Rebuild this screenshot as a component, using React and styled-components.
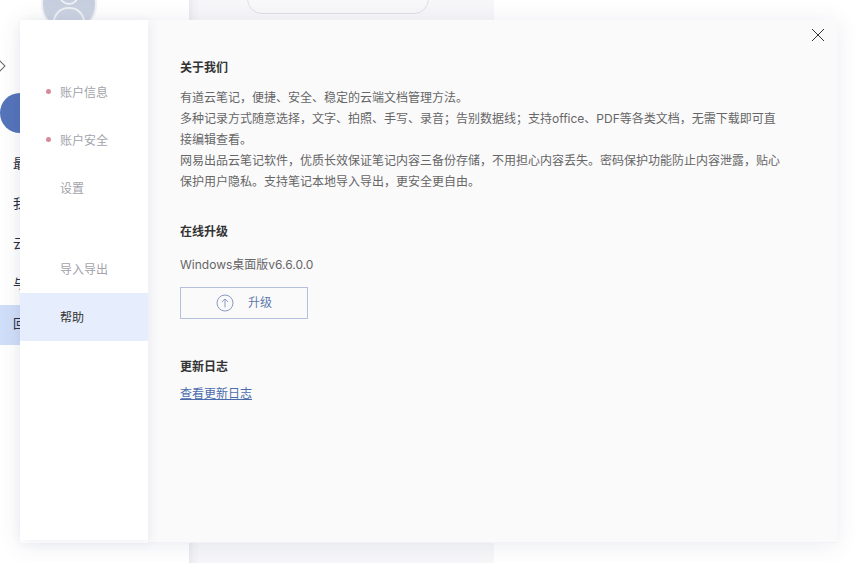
import React from 'react'
import styled, { createGlobalStyle } from 'styled-components'

const GlobalStyle = createGlobalStyle`
    html, body {
        margin: 0;
        padding: 0;
        background: #fff;
        overflow: hidden;
    }
    body {
        font-family: "Inter", "Noto Sans CJK SC", sans-serif;
    }
`;

const Page = styled.div`
    position: relative;
    display: flex;
    width: 858px;
    height: 563px;
    overflow: hidden;
    background: #fff;
`;

// pagina por tras do modal
const BackSidebar = styled.aside`
    width: 189px;
    flex-shrink: 0;
    display: flex;
    flex-direction: column;
    background: #fff;
`;

const Avatar = styled.div`
    width: 52px;
    height: 52px;
    margin: -24px 0 0 41px;
    border-radius: 50%;
    border: 2px solid #eef0f4;
    background: linear-gradient(#bcc6d9, #d3d9e6);
    overflow: hidden;
    svg { display: block; }
`;

const Diamond = styled.span`
    width: 6px;
    height: 6px;
    margin: 30px 0 0 -4px;
    border: 1px solid #666;
    transform: rotate(45deg);
`;

const NewButton = styled.div`
    width: 150px;
    height: 40px;
    margin-top: 23px;
    border-radius: 20px;
    background: #5574ba;
`;

const BackNav = styled.nav`
    margin-top: 12px;
    display: flex;
    flex-direction: column;
`;

const BackNavItem = styled.div`
    height: 40px;
    padding-left: 13px;
    line-height: 37px;
    font-size: 13px;
    color: #2a3040;
    background: ${(props) => props.ativo ? '#d0def9' : 'transparent'};
`;

const ListPanel = styled.section`
    width: 305px;
    flex-shrink: 0;
    background: #f7f7f9;
    box-shadow: inset 10px 0 10px -8px rgba(60, 70, 120, 0.1);
`;

const SearchBox = styled.div`
    width: 180px;
    height: 28px;
    margin: -16px 0 0 58px;
    border: 1px solid #e0e0e4;
    border-radius: 15px;
    background: #f8f8fa;
`;

// modal
const Modal = styled.div`
    position: absolute;
    left: 20px;
    top: 20px;
    width: 817px;
    height: 523px;
    display: flex;
    align-items: flex-start;
    box-shadow: 0 2px 22px rgba(60, 70, 120, 0.1);
`;

const Menu = styled.nav`
    position: relative;
    z-index: 1;
    width: 128px;
    height: 520px;
    flex-shrink: 0;
    display: flex;
    flex-direction: column;
    padding-top: 48px;
    box-sizing: border-box;
    background: #fff;
    box-shadow: 2px 2px 10px rgba(60, 70, 120, 0.08);
`;

const MenuItem = styled.div`
    position: relative;
    height: 48px;
    margin-bottom: ${(props) => props.gap || 0}px;
    padding-left: 40px;
    line-height: 50px;
    font-size: 12px;
    color: ${(props) => props.ativo ? '#333' : '#a3a3ab'};
    background: ${(props) => props.ativo ? '#e6edfc' : 'transparent'};
`;

const Dot = styled.i`
    position: absolute;
    left: 26px;
    top: 21px;
    width: 5px;
    height: 5px;
    border-radius: 50%;
    background: #d98a98;
`;

const Content = styled.main`
    position: relative;
    flex: 1;
    align-self: stretch;
    padding: 37px 0 0 32px;
    box-sizing: border-box;
    background: #fafafb;
    border-bottom: 1px solid #f1f1f8;
`;

const CloseButton = styled.button`
    position: absolute;
    top: 8px;
    right: 12px;
    width: 14px;
    height: 14px;
    padding: 0;
    border: 0;
    background: transparent;
    svg { display: block; }
`;

const Title = styled.h2`
    margin: ${(props) => props.mt || 0}px 0 0;
    font-size: 12px;
    line-height: 22px;
    font-weight: 700;
    color: #333;
`;

const Text = styled.p`
    width: 600px;
    margin: ${(props) => props.mt || 0}px 0 0;
    font-size: 12px;
    line-height: 21px;
    color: #666;
`;

const UpgradeButton = styled.button`
    display: flex;
    align-items: center;
    width: 128px;
    height: 32px;
    margin-top: 12px;
    padding: 0 0 4px 35px;
    box-sizing: border-box;
    gap: 14px;
    border: 1px solid #b5c1dc;
    background: transparent;
    font-family: inherit;
    font-size: 12px;
    color: #5f78ac;
    svg { margin-top: 4px; }
`;

const LogLink = styled.a`
    display: inline-block;
    margin-top: 7px;
    font-size: 12px;
    line-height: 18px;
    color: #4a6cab;
    text-decoration: underline;
`;

const navItems = ['最近', '我的', '云协作', '与我', '回收站']

const App = () => {
    return (
        <Page>
            <GlobalStyle />
            <BackSidebar>
                <Avatar>
                    <svg width="52" height="52" viewBox="0 0 52 52" fill="none" stroke="#eef0f5" strokeWidth="2">
                        <circle cx="26" cy="17" r="9" />
                        <path d="M10 50c0-14 7-20 16-20s16 6 16 20" />
                    </svg>
                </Avatar>
                <Diamond />
                <NewButton />
                <BackNav>
                    {navItems.map((item, i) => (
                        <BackNavItem key={item} ativo={i === 4}>{item}</BackNavItem>
                    ))}
                </BackNav>
            </BackSidebar>
            <ListPanel>
                <SearchBox />
            </ListPanel>

            <Modal>
                <Menu>
                    <MenuItem><Dot />账户信息</MenuItem>
                    <MenuItem><Dot />账户安全</MenuItem>
                    <MenuItem gap={33}>设置</MenuItem>
                    <MenuItem>导入导出</MenuItem>
                    <MenuItem ativo>帮助</MenuItem>
                </Menu>
                <Content>
                    <CloseButton>
                        <svg width="14" height="14" viewBox="0 0 14 14" fill="none" stroke="#333" strokeWidth="1">
                            <path d="M1 1l12 12M13 1L1 13" />
                        </svg>
                    </CloseButton>
                    <Title>关于我们</Title>
                    <Text mt={8}>
                        有道云笔记，便捷、安全、稳定的云端文档管理方法。<br />
                        多种记录方式随意选择，文字、拍照、手写、录音；告别数据线；支持office、PDF等各类文档，无需下载即可直接编辑查看。<br />
                        网易出品云笔记软件，优质长效保证笔记内容三备份存储，不用担心内容丢失。密码保护功能防止内容泄露，贴心保护用户隐私。支持笔记本地导入导出，更安全更自由。
                    </Text>
                    <Title mt={29}>在线升级</Title>
                    <Text mt={11}>Windows桌面版v6.6.0.0</Text>
                    <UpgradeButton>
                        <svg width="18" height="18" viewBox="0 0 18 18" fill="none" stroke="#8a9cc2" strokeWidth="1">
                            <circle cx="9" cy="9" r="8" />
                            <path d="M9 13.5V5M5.8 8L9 5l3.2 3" />
                        </svg>
                        升级
                    </UpgradeButton>
                    <Title mt={37}>更新日志</Title>
                    <LogLink>查看更新日志</LogLink>
                </Content>
            </Modal>
        </Page>
    )
}

export default App
